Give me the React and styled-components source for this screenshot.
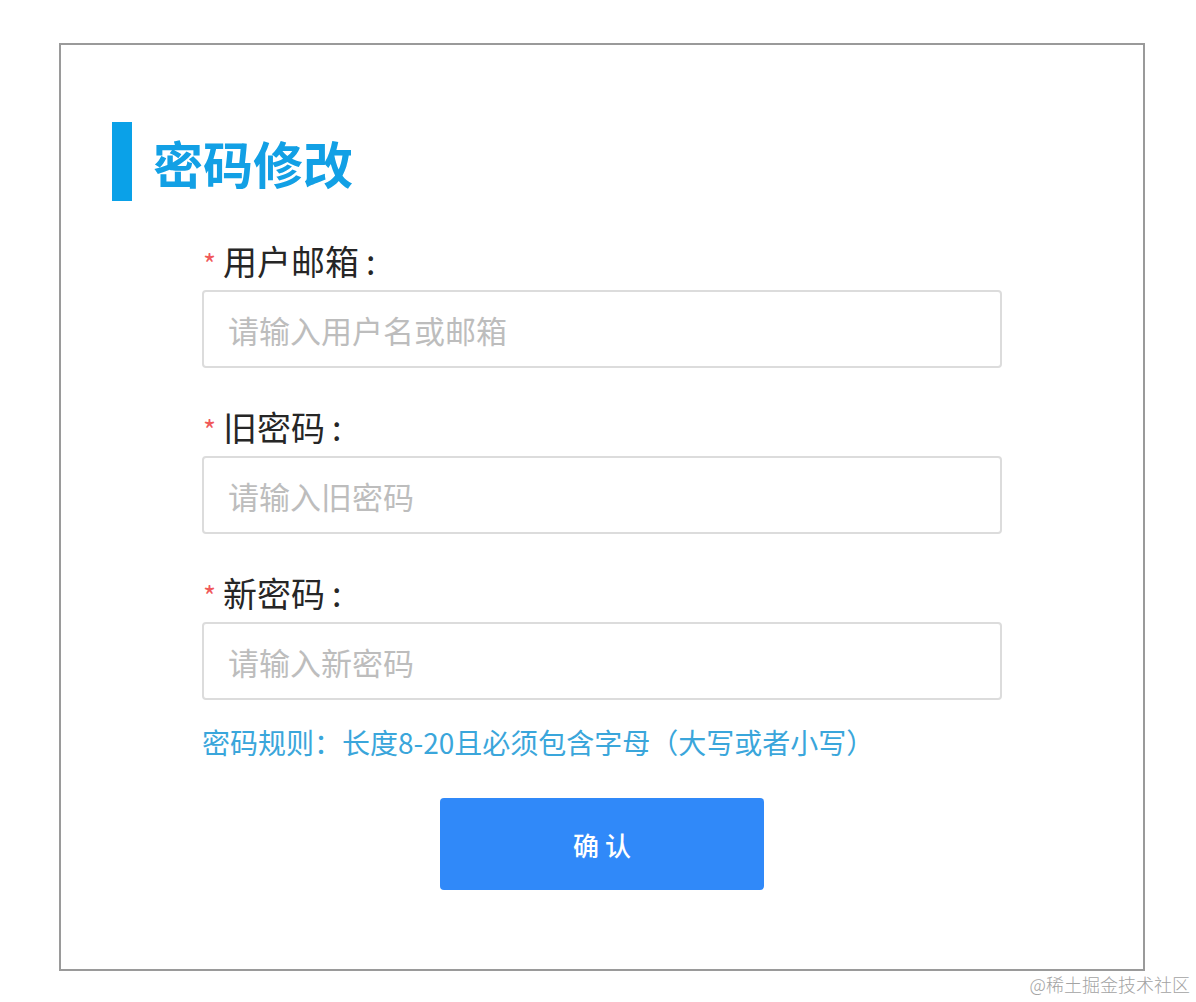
import React from 'react';
import styled, { createGlobalStyle } from 'styled-components';

const GlobalStyle = createGlobalStyle`
  html, body {
    margin: 0;
    padding: 0;
    background: #fff;
    font-family: "Noto Sans CJK SC", "Noto Sans", "Liberation Sans", sans-serif;
  }
`

const Page = styled.div`
  width: 1196px;
  padding: 43px 0 0 59px;
  box-sizing: border-box;
`

const Card = styled.div`
  width: 1086px;
  height: 928px;
  box-sizing: border-box;
  border: 2px solid #9a9a9a;
  padding: 77px 0 0 51px;
`

const TitleRow = styled.div`
  display: flex;
  align-items: center;
  height: 79px;
  gap: 21px;
`

const TitleBar = styled.div`
  width: 20px;
  height: 79px;
  background: #0aa1e8;
`

const Title = styled.h2`
  margin: 0;
  font-size: 50px;
  line-height: 60px;
  font-weight: 700;
  color: #12a0e5;
`

const Form = styled.form`
  width: 800px;
  margin: 39px 0 0 90px;
  display: flex;
  flex-direction: column;
`

const Field = styled.div`
  display: flex;
  flex-direction: column;
  margin-bottom: ${p => p.$last ? '24px' : '38px'};
`

const Label = styled.label`
  display: flex;
  align-items: center;
  height: 40px;
  margin-bottom: 10px;
  font-size: 34px;
  color: #262626;
`

const Star = styled.span`
  color: #f0595a;
  font-size: 28px;
  margin: 0 7px 0 1px;
  position: relative;
  top: 3px;
`

const Colon = styled.span`
  margin-left: 7px;
`

const Input = styled.input`
  width: 800px;
  height: 78px;
  box-sizing: border-box;
  border: 2px solid #dcdcdc;
  border-radius: 4px;
  padding: 0 24px;
  font-size: 31px;
  font-family: inherit;
  color: #333;
  outline: none;

  &::placeholder {
    color: #bdbdbd;
  }
`

const Rule = styled.p`
  margin: 0;
  font-size: 28px;
  line-height: 36px;
  color: #3aa6db;
`

const Submit = styled.button`
  align-self: center;
  margin-top: 38px;
  width: 324px;
  height: 92px;
  border: none;
  border-radius: 4px;
  background: #3089f9;
  color: #fff;
  font-family: inherit;
  font-size: 26px;
  font-weight: 500;
  white-space: pre;
  cursor: pointer;
`

const Watermark = styled.div`
  width: 1131px;
  text-align: right;
  font-size: 18px;
  line-height: 26px;
  color: #a3a3a3;
  font-weight: 300;
`

const fields = [
  { label: '用户邮箱', placeholder: '请输入用户名或邮箱' },
  { label: '旧密码', placeholder: '请输入旧密码' },
  { label: '新密码', placeholder: '请输入新密码' },
];

const App = () => {
  return (
    <React.Fragment>
      <GlobalStyle />
      <Page>
        <Card>
          <TitleRow>
            <TitleBar />
            <Title>密码修改</Title>
          </TitleRow>
          <Form onSubmit={e => e.preventDefault()}>
            {fields.map((f, i) => (
              <Field key={f.label} $last={i === fields.length - 1}>
                <Label>
                  <Star>*</Star>
                  {f.label}
                  <Colon>:</Colon>
                </Label>
                <Input type="text" placeholder={f.placeholder} />
              </Field>
            ))}
            <Rule>密码规则：长度8-20且必须包含字母（大写或者小写）</Rule>
            <Submit type="submit">确 认</Submit>
          </Form>
        </Card>
        <Watermark>@稀土掘金技术社区</Watermark>
      </Page>
    </React.Fragment>
  );
};

export default App;
